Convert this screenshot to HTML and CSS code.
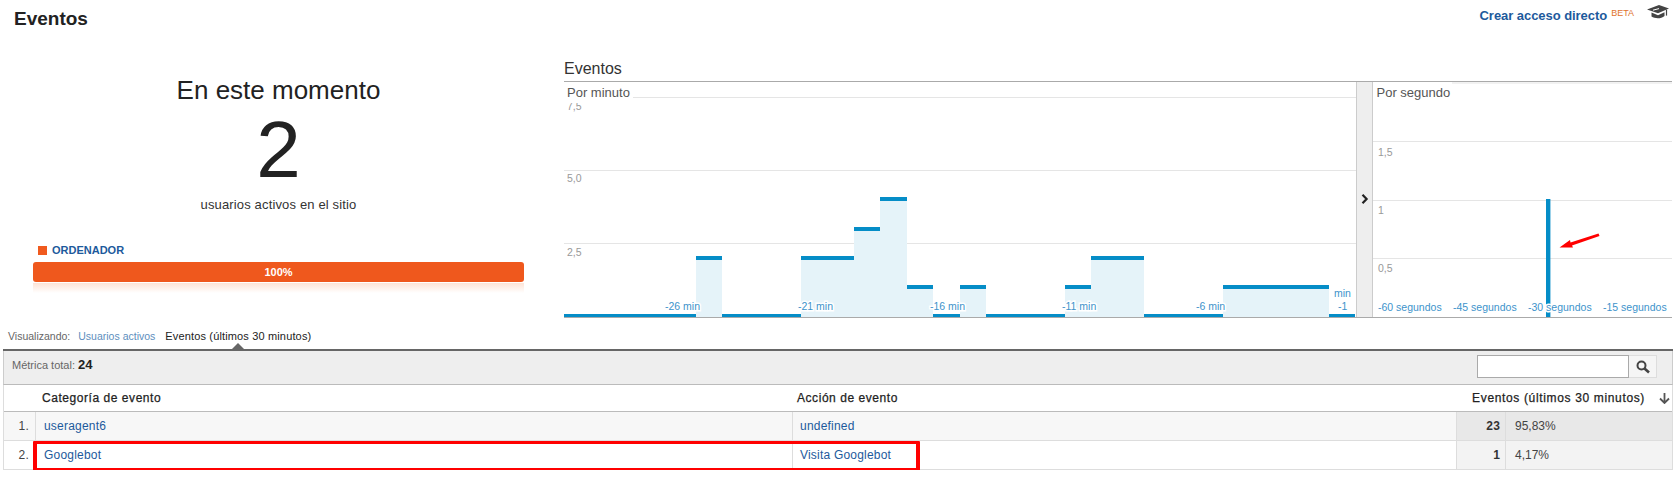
FILE: index.html
```html
<!DOCTYPE html>
<html lang="es">
<head>
<meta charset="UTF-8">
<meta name="viewport" content="width=device-width, initial-scale=1.0">
<title>Eventos</title>
<link rel="stylesheet" href="styles.css">
</head>
<body>
  <div class="topbar">
    <h1>Eventos</h1>
    <div class="shortcut">
      <a href="#">Crear acceso directo</a>
      <span class="beta">BETA</span>
      <svg class="cap" width="22" height="14" viewBox="0 0 22 14">
        <path d="M0 4.6 12 0l10 3.4-11 4.8z" fill="#444"/>
        <path d="M4.5 7.6 11 10.2l6.5-2.9v3.6C14 14 8 13.6 4.5 11.6z" fill="#444"/>
        <path d="M6 5.2l6-1.6" stroke="#fff" stroke-width="1"/>
        <path d="M19.5 4.6v6" stroke="#444" stroke-width="1.2"/>
      </svg>
    </div>
  </div>

  <div class="overview">
    <div class="summary">
      <div class="now">En este momento</div>
      <div class="count">2</div>
      <div class="count-label">usuarios activos en el sitio</div>
      <div class="legend"><span class="swatch"></span>ORDENADOR</div>
      <div class="device-bar">100%</div>
      <div class="device-reflection"></div>
    </div>

    <div class="charts">
      <h2>Eventos</h2>
      <div class="chart-row">
        <svg class="chart-min" width="792" height="235" viewBox="0 0 792 235">
          <path class="grid" d="M69 15.5H792M0 88.5H792M0 161.5H792"/>
          <text class="axis" x="3" y="27.5">7,5</text>
          <rect x="0" y="16" width="60" height="5" fill="#fff"/>
          <text class="axis" x="3" y="100">5,0</text>
          <text class="axis" x="3" y="174">2,5</text>
          <text class="panel-title" x="3" y="14.5">Por minuto</text>
          <path class="area" d="M132 176H158V235H132ZM237 176H290V147H316V117H343V205H369V235H237ZM396 205H422V235H396ZM501 205H527V176H580V235H501ZM659 205H765V235H659Z"/>
          <path class="line" d="M0 234H132M132 176H158M158 234H237M237 176H290M290 147H316M316 117H343M343 205H369M369 234H396M396 205H422M422 234H501M501 205H527M527 176H580M580 234H659M659 205H765M765 234H791"/>
          <text class="tick" x="101" y="228">-26 min</text>
          <text class="tick" x="234" y="228">-21 min</text>
          <text class="tick" x="366" y="228">-16 min</text>
          <text class="tick" x="498" y="228">-11 min</text>
          <text class="tick" x="632" y="228">-6 min</text>
          <text class="tick" x="770" y="215">min</text>
          <text class="tick" x="774" y="228">-1</text>
        </svg>
        <div class="splitter">
          <svg width="8" height="10" viewBox="0 0 8 10"><path d="M1.5 .8 5.6 5 1.5 9.2" fill="none" stroke="#222" stroke-width="2.2"/></svg>
        </div>
        <svg class="chart-sec" width="299" height="235" viewBox="0 0 299 235">
          <path class="grid" d="M79 1H299M0 59.5H299M0 118.5H299M0 176.5H299"/>
          <text class="panel-title" x="3.5" y="14.5">Por segundo</text>
          <text class="axis" x="5" y="73.5">1,5</text>
          <text class="axis" x="5" y="132">1</text>
          <text class="axis" x="5" y="189.5">0,5</text>
          <rect class="bar" x="173" y="117" width="4.4" height="118"/>
          <path d="M186.500 165.500 197 158l.5 2.500 28-9 1 2.500-27.500 9.500 1 2z" fill="#f00"/>
          <text class="tick" x="5" y="229">-60 segundos</text>
          <text class="tick" x="80" y="229">-45 segundos</text>
          <text class="tick" x="155" y="229">-30 segundos</text>
          <text class="tick" x="230" y="229">-15 segundos</text>
        </svg>
      </div>
    </div>
  </div>

  <div class="tabs">
    <span class="tabs-label">Visualizando:</span>
    <a href="#">Usuarios activos</a>
    <span class="tab-active">Eventos (últimos 30 minutos)</span>
  </div>

  <div class="report">
    <div class="toolbar">
      <div class="total">Métrica total: <strong>24</strong></div>
      <div class="search">
        <input type="text">
        <button type="button">
          <svg width="14" height="14" viewBox="0 0 14 14"><circle cx="5.500" cy="5.500" r="4" fill="none" stroke="#444" stroke-width="2"/><path d="M8.500 8.500 13 12.500" stroke="#444" stroke-width="2.600"/></svg>
        </button>
      </div>
    </div>
    <table>
      <colgroup>
        <col class="col-num"><col class="col-cat"><col class="col-act"><col class="col-val"><col>
      </colgroup>
      <thead>
        <tr>
          <th colspan="2" class="th-cat">Categoría de evento</th>
          <th class="th-act">Acción de evento</th>
          <th colspan="2" class="th-val">Eventos (últimos 30 minutos)
            <svg class="sort" width="11" height="11" viewBox="0 0 11 11"><path d="M5.500 0v9M1 5.500 5.500 10 10 5.500" fill="none" stroke="#555" stroke-width="1.800"/></svg>
          </th>
        </tr>
      </thead>
      <tbody>
        <tr class="odd">
          <td class="num">1.</td>
          <td class="cat"><a href="#">useragent6</a></td>
          <td><a href="#">undefined</a></td>
          <td class="val">23</td>
          <td class="pct">95,83%</td>
        </tr>
        <tr>
          <td class="num">2.</td>
          <td class="cat"><a href="#">Googlebot</a></td>
          <td><a href="#">Visita Googlebot</a></td>
          <td class="val">1</td>
          <td class="pct">4,17%</td>
        </tr>
      </tbody>
    </table>
    <div class="highlight"></div>
  </div>
</body>
</html>
```

FILE: styles.css
```css
* { margin:0; padding:0; box-sizing:border-box; }
body { font-family:"Liberation Sans", Arial, sans-serif; background:#fff; color:#333; width:1677px; overflow:hidden; }
a { color:#1d5a9c; text-decoration:none; }

.topbar { height:38px; display:flex; justify-content:space-between; padding:7px 8px 0 14px; }
h1 { font-size:19px; line-height:24px; color:#222; }
.shortcut { display:flex; align-items:flex-start; }
.shortcut a { font-size:13px; font-weight:700; line-height:17px; letter-spacing:-.05px; }
.beta { font-size:9px; line-height:12px; color:#e0722c; margin-left:4px; }
.cap { margin:-2px 0 0 13px; }

.overview { height:280px; display:flex; }
.summary { width:491px; margin-left:33px; padding-top:37px; text-align:center; }
.now { font-size:26px; line-height:30px; color:#222; }
.count { font-size:80px; line-height:80px; color:#222; margin-top:5px; }
.count-label { font-size:13px; line-height:16px; letter-spacing:.15px; margin-top:7px; color:#333; }
.legend { display:flex; align-items:center; margin:30px 0 0 5px; font-size:11px; font-weight:700; line-height:14px; color:#1d5a9c; }
.swatch { width:9px; height:9px; background:#f05a1e; margin-right:5px; }
.device-bar { height:20px; margin-top:5px; border-radius:3px; background:#ef581d; color:#fff; font-size:11px; font-weight:700; line-height:20px; }
.device-reflection { height:10px; margin-top:1px; background:linear-gradient(#fde3d6, #fff); }

.charts { width:1108px; margin-left:40px; }
h2 { height:43px; padding-top:22px; font-size:16px; font-weight:400; line-height:18px; color:#333; }
.chart-row { display:flex; height:237px; border-top:1px solid #aaa; border-bottom:1px solid #aaa; }
.chart-row svg { display:block; }
.splitter { width:17px; display:flex; align-items:center; justify-content:center; background:#eee; border-left:1px solid #ccc; border-right:1px solid #ccc; padding-bottom:2px; }
.grid { fill:none; stroke:#e5e5e5; stroke-width:1; }
.axis { font-size:10.5px; fill:#999; }
.panel-title { font-size:13px; fill:#555; }
.area { fill:#e5f3f9; }
.line { fill:none; stroke:#058dc7; stroke-width:4; }
.bar { fill:#058dc7; }
.tick { font-size:10.5px; fill:#3d93cb; stroke:#fff; stroke-width:3px; paint-order:stroke; }

.tabs { height:31px; padding:11px 0 0 8px; display:flex; font-size:10.5px; line-height:14px; }
.tabs-label { color:#666; margin-right:8px; }
.tabs a { color:#5d8ebd; margin-right:10px; }
.tab-active { position:relative; font-size:11px; letter-spacing:.15px; color:#222; }
.tab-active::after { content:""; position:absolute; left:50%; top:14px; margin-left:-6px; border:6px solid transparent; border-top:0; border-bottom-color:#666; }

.report { position:relative; width:1670px; margin-left:3px; border-top:2px solid #666; }
.toolbar { height:34px; display:flex; justify-content:space-between; background:#eee; border:1px solid #ccc; border-top:0; border-bottom-color:#bbb; padding:4px 15px 0 8px; }
.total { font-size:11px; line-height:20px; color:#666; }
.total strong { font-size:13px; color:#222; }
.search { display:flex; height:23px; }
.search input { width:152px; height:23px; border:1px solid #aaa; background:#fff; }
.search button { width:28px; height:23px; border:1px solid #ddd; border-left:0; background:#f5f5f5; display:flex; align-items:center; justify-content:center; }

table { width:1670px; border-collapse:separate; border-spacing:0; table-layout:fixed; font-size:12px; letter-spacing:.2px; border-left:1px solid #ddd; border-right:1px solid #ddd; }
.col-num { width:32px; }
.col-cat { width:756px; }
.col-act { width:664px; }
.col-val { width:50px; }
th { height:27px; font-size:12px; font-weight:400; text-align:left; letter-spacing:.55px; color:#222; border-bottom:1px solid #bbb; -webkit-text-stroke:.25px #222; }
.th-cat { padding-left:38px; }
.th-act { padding-left:5px; }
.th-val { text-align:right; padding-right:2px; letter-spacing:.65px; }
.sort { margin-left:10px; vertical-align:-2px; }
td { height:29px; padding-left:7px; border-bottom:1px solid #ddd; }
td.cat { padding-left:8px; }
tbody tr:last-child td { background:#fff; }
.odd td { background:#f7f7f7; }
td.num { padding:0 6px 0 0; text-align:right; color:#444; border-right:1px solid #ddd; background:#fff; }
td:nth-child(3) { border-left:1px solid #ddd; }
td.val { padding:0 5px 0 0; text-align:right; font-weight:700; color:#333; border-left:1px solid #ddd; border-right:1px solid #ddd; }
td.pct { padding-left:9px; letter-spacing:0; color:#444; }
tbody tr td.val, tbody tr td.pct { background:#f3f3f3; }
tbody tr.odd td.val, tbody tr.odd td.pct { background:#e8e8e8; }
tbody tr.odd td.num { background:#f7f7f7; }

.highlight { position:absolute; left:30px; top:90px; width:887px; height:30px; border:solid #f00; border-width:3px 4px; border-radius:1px; }
```
